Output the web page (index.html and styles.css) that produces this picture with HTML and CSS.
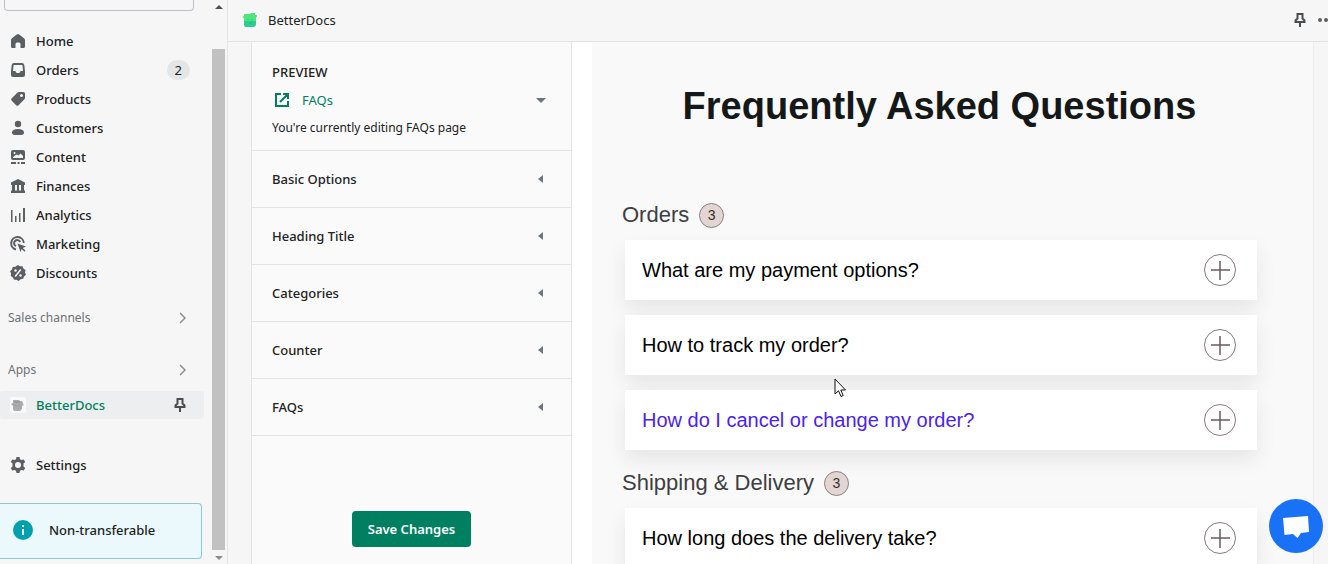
FILE: index.html
```html
<!DOCTYPE html>
<html lang="en">
<head>
  <meta charset="UTF-8">
  <title>BetterDocs</title>
  <link rel="stylesheet" href="styles.css">
</head>
<body>

  <div class="app">

    <aside class="sidebar">
      <div class="sidebar-content">
        <input class="search" type="text" aria-label="Search">

        <nav class="nav">
          <a href="#"><svg viewBox="0 0 16 16"><path d="M8 1Q8.600 1 9.200 1.500L14.300 5.500Q15 6 15 7V13.500Q15 15 13.500 15H10.500V11Q10.500 9.500 9 9.500H7Q5.500 9.500 5.500 11V15H2.500Q1 15 1 13.500V7Q1 6 1.700 5.500L6.800 1.500Q7.400 1 8 1Z"/></svg>Home</a>
          <a href="#"><svg viewBox="0 0 16 16"><path fill-rule="evenodd" d="M4 1H12Q14 1 14.300 3L15 9V13Q15 15 13 15H3Q1 15 1 13V9L1.700 3Q2 1 4 1ZM4 3Q3.600 3 3.500 3.500L3 9H5Q5.500 9 6 10Q6.300 11 7 11H9Q9.700 11 10 10Q10.500 9 11 9H13L12.500 3.500Q12.400 3 12 3Z"/></svg>Orders<span class="badge">2</span></a>
          <a href="#"><svg viewBox="0 0 16 16"><path fill-rule="evenodd" d="M9 1H13.500Q15 1 15 2.500V7Q15 7.700 14.400 8.300L8.300 14.400Q7.500 15.200 6.500 14.400L1.500 9.500Q.700 8.500 1.500 7.600L7.600 1.500Q8.200 1 9 1ZM11.500 3A1.500 1.500 0 1 0 11.500 6A1.500 1.500 0 1 0 11.500 3Z"/></svg>Products</a>
          <a href="#"><svg viewBox="0 0 16 16"><circle cx="8" cy="4" r="3.200"/><path d="M8 9C12 9 14 10.500 14 12.500C14 14 13 15 11.500 15H4.500C3 15 2 14 2 12.500C2 10.500 4 9 8 9Z"/></svg>Customers</a>
          <a href="#"><svg viewBox="0 0 16 16"><path fill-rule="evenodd" d="M3 1H13Q15 1 15 3V9Q15 11 13 11H3Q1 11 1 9V3Q1 1 3 1ZM3 9H13V7L10.500 4.500L8.500 6.500L6.500 5.500L3 8ZM4.500 3A1 1 0 1 0 4.500 5A1 1 0 1 0 4.500 3ZM1 13H6V15H1ZM7.500 13H9.500V15H7.500ZM11 13H15V15H11Z"/></svg>Content</a>
          <a href="#"><svg viewBox="0 0 16 16"><path fill-rule="evenodd" d="M8 1L15 4.500V7H14V12.500H15V15H1V12.500H2V7H1V4.500ZM5 7V12.500H7V7ZM9 7V12.500H11V7Z"/></svg>Finances</a>
          <a href="#"><svg viewBox="0 0 16 16"><path d="M1 3H2.500V15H1ZM5 9H6.500V15H5ZM9 6H10.500V15H9ZM13 1H15V15H13Z"/></svg>Analytics</a>
          <a href="#"><svg viewBox="0 0 16 16"><path class="line" d="M13.800 7A6.300 6.300 0 1 0 6 13.500M10.200 6A3.200 3.200 0 1 0 6 10.200"/><path d="M7.500 7.500L16 10.500L12.800 12L15.500 14.500L14.500 15.700L11.800 13L10.500 16Z"/></svg>Marketing</a>
          <a href="#"><svg viewBox="0 0 16 16"><path d="M8 0L10 1.300L12.500 1.200L13.400 3.500L15.500 5L15 7.500L16 9.800L14 11.500L13.200 13.800L10.700 14.200L8.700 16L6.500 14.800L4 14.800L2.900 12.500L.700 11L1.100 8.500L0 6.200L2 4.500L2.700 2.100L5.300 1.700Z"/><path class="cut" d="M10.800 4.500L5.200 11.500"/><circle class="dot" cx="5.500" cy="5.500" r="1.200"/><circle class="dot" cx="10.500" cy="10.500" r="1.200"/></svg>Discounts</a>
        </nav>

        <button class="section-title">Sales channels <svg viewBox="0 0 16 16"><path d="M6 3L11 8L6 13"/></svg></button>
        <button class="section-title apps">Apps <svg viewBox="0 0 16 16"><path d="M6 3L11 8L6 13"/></svg></button>

        <div class="nav app-nav">
          <a class="active" href="#">
            <svg class="docs-logo" viewBox="0 0 16 16"><rect class="logo-bg" width="16" height="16" rx="2"/><path d="M3 3H9L10 4H12L13 6V7L14 8L12 9V12L10 14H4L3 12V9L1 7L3 6Z"/><path class="face" d="M4 5H10M6 8V9M9 8V9"/></svg>
            BetterDocs
            <svg class="pin" viewBox="0 0 16 16"><path d="M4.500 2H11.500M5.500 2V6.500L3.500 8.500V10H12.500V8.500L10.500 6.500V2M8 10V15"/></svg>
          </a>
        </div>

        <nav class="nav settings">
          <a href="#"><svg viewBox="0 0 16 16"><path fill-rule="evenodd" d="M6.500 0H9.500L10 2.300L11.500 3.100L13.700 2.400L15.200 5L13.500 6.600V9.400L15.200 11L13.700 13.600L11.500 12.900L10 13.700L9.500 16H6.500L6 13.700L4.500 12.900L2.300 13.600L.800 11L2.500 9.400V6.600L.800 5L2.300 2.400L4.500 3.100L6 2.300ZM8 5A3 3 0 1 0 8 11A3 3 0 1 0 8 5Z"/></svg>Settings</a>
        </nav>

        <div class="notice">
          <svg viewBox="0 0 20 20"><circle cx="10" cy="10" r="10"/><path d="M9 5H11V7H9ZM9 9H11V15H9Z"/></svg>
          Non-transferable
        </div>
      </div>

      <div class="scrollbar">
        <span class="arrow-up"></span>
        <div class="thumb"></div>
        <span class="arrow-down"></span>
      </div>
    </aside>

    <main class="main">
      <header class="topbar">
        <svg class="docs-logo green" viewBox="0 0 16 16"><rect class="logo-bg" width="16" height="16" rx="2"/><path class="upper" d="M2 2H8L9 1H13V3H15V5H14V9H2V6L0 5L2 4Z"/><path class="lower" d="M2 9H14V13L12 15H3L2 13Z"/><path class="face" d="M6 7V8M10 7V8M7 11Q8 12 10 10"/></svg>
        <span>BetterDocs</span>
        <button class="icon-button pin-button" aria-label="Pin"><svg class="pin" viewBox="0 0 16 16"><path d="M4.500 2H11.500M5.500 2V6.500L3.500 8.500V10H12.500V8.500L10.500 6.500V2M8 10V15"/></svg></button>
        <button class="icon-button" aria-label="More"><svg class="more" viewBox="0 0 16 16"><circle cx="2" cy="8" r="2"/><circle cx="8" cy="8" r="2"/><circle cx="14" cy="8" r="2"/></svg></button>
      </header>

      <div class="workspace">
        <section class="panel">
          <div class="preview-select">
            <h2>PREVIEW</h2>
            <button class="page-picker">
              <svg viewBox="0 0 16 16"><path d="M7 2H2V14H14V9M9 2H14V7M13.500 2.500L6 10"/></svg>
              FAQs
              <span class="caret-down"></span>
            </button>
            <p>You're currently editing FAQs page</p>
          </div>
          <button class="option">Basic Options <span class="caret-left"></span></button>
          <button class="option">Heading Title <span class="caret-left"></span></button>
          <button class="option">Categories <span class="caret-left"></span></button>
          <button class="option">Counter <span class="caret-left"></span></button>
          <button class="option">FAQs <span class="caret-left"></span></button>
          <button class="save">Save Changes</button>
        </section>

        <section class="preview">
          <div class="faq-page">
            <h1>Frequently Asked Questions</h1>

            <h3>Orders <span class="count">3</span></h3>
            <div class="faq-list">
              <button class="faq">What are my payment options? <svg viewBox="0 0 32 32"><circle cx="16" cy="16" r="15.500"/><path d="M7 16H26M16 7V26"/></svg></button>
              <button class="faq">How to track my order? <svg viewBox="0 0 32 32"><circle cx="16" cy="16" r="15.500"/><path d="M7 16H26M16 7V26"/></svg></button>
              <button class="faq hovered">How do I cancel or change my order? <svg viewBox="0 0 32 32"><circle cx="16" cy="16" r="15.500"/><path d="M7 16H26M16 7V26"/></svg></button>
            </div>

            <h3>Shipping &amp; Delivery <span class="count">3</span></h3>
            <div class="faq-list">
              <button class="faq">How long does the delivery take? <svg viewBox="0 0 32 32"><circle cx="16" cy="16" r="15.500"/><path d="M7 16H26M16 7V26"/></svg></button>
            </div>
          </div>
        </section>
      </div>
    </main>

    <svg class="cursor" viewBox="0 0 12 20"><path d="M1 1V16L4.500 12.800L7 18.500L9.200 17.500L6.800 12H11.500Z"/></svg>
    <button class="chat" aria-label="Open chat"><svg viewBox="0 0 54 54"><path d="M14 19L39 17L40 33L32 34L28.500 39L24 35L15.500 36Z"/></svg></button>
  </div>

</body>
</html>
```

FILE: styles.css
```css
* {
  box-sizing: border-box;
}

body {
  margin: 0;
  background: #f6f6f7;
  color: #202223;
  font-family: "Noto Sans", "Open Sans", sans-serif;
  font-size: 13px;
  line-height: 20px;
}

button {
  font: inherit;
  color: inherit;
  background: none;
  border: none;
  padding: 0;
  text-align: left;
  cursor: pointer;
}

a {
  color: inherit;
  text-decoration: none;
}

svg {
  flex: none;
}

.app {
  display: flex;
  position: relative;
  height: 100vh;
  overflow: hidden;
}

/* sidebar */

.sidebar {
  display: flex;
  flex: none;
  width: 228px;
  border-right: 1px solid #e6e6e8;
}

.sidebar-content {
  display: flex;
  flex-direction: column;
  flex: 1;
}

.search {
  height: 11px;
  margin: 0 18px 15px 4px;
  border: 1px solid #babfc9;
  border-top: none;
  border-radius: 0 0 4px 4px;
  background: #f6f6f7;
}

.nav a {
  display: flex;
  align-items: center;
  gap: 10px;
  height: 29px;
  padding: 0 22px 0 10px;
  font-weight: 500;
}

.nav svg {
  width: 16px;
  height: 16px;
  fill: #5c5f62;
}

.nav .line {
  fill: none;
  stroke: #5c5f62;
  stroke-width: 2;
}

.nav .cut {
  stroke: #f6f6f7;
  stroke-width: 1.5;
}

.nav .dot {
  fill: #f6f6f7;
}

.badge {
  margin-left: auto;
  padding: 0 8px;
  border-radius: 10px;
  background: #e4e5e7;
  font-weight: 400;
}

.section-title {
  display: flex;
  align-items: center;
  justify-content: space-between;
  margin: 17px 22px 0 8px;
  height: 28px;
  color: #6d7175;
  font-size: 12px;
}

.section-title svg {
  width: 16px;
  height: 16px;
  fill: none;
  stroke: #8c9196;
  stroke-width: 1.5;
}

.section-title.apps {
  margin-top: 24px;
}

.app-nav {
  margin: 7px 8px 0 0;
}

.nav .active {
  height: 28px;
  padding: 0 16px 0 10px;
  border-radius: 3px;
  background: #edeeef;
  color: #008060;
}

.docs-logo {
  width: 16px;
  height: 16px;
}

.docs-logo path {
  fill: #a9acac;
}

.docs-logo .logo-bg {
  fill: #fafafa;
}

.docs-logo .face {
  fill: none;
  stroke: #8f9292;
}

.nav .pin,
.pin {
  width: 16px;
  height: 16px;
  margin-left: auto;
  fill: none;
  stroke: #4a4d50;
  stroke-width: 2;
}

.settings {
  margin-top: 31px;
}

.notice {
  display: flex;
  align-items: center;
  gap: 16px;
  height: 56px;
  margin: 24px 10px 0 0;
  padding: 0 0 2px 13px;
  border: 1px solid #8fc7cd;
  border-left: none;
  border-radius: 0 4px 4px 0;
  background: #ebf9fc;
  font-weight: 500;
}

.notice svg {
  width: 20px;
  height: 20px;
  fill: #00a0ac;
}

.notice path {
  fill: #fff;
}

.scrollbar {
  display: flex;
  flex-direction: column;
  align-items: center;
  width: 13px;
  margin-right: 2px;
}

.thumb {
  flex: 1;
  width: 13px;
  margin-top: 40px;
  background: #c1c1c1;
}

.arrow-up,
.arrow-down {
  border: 4px solid transparent;
}

.arrow-up {
  margin-top: 1px;
  border-bottom-color: #505050;
}

.arrow-down {
  margin: 6px 0 0;
  border-top-color: #8b8b8b;
}

/* main area */

.main {
  display: flex;
  flex-direction: column;
  flex: 1;
  min-width: 0;
}

.topbar {
  display: flex;
  align-items: center;
  gap: 10px;
  flex: none;
  height: 42px;
  padding: 0 0 2px 14px;
  border-bottom: 1px solid #e1e3e5;
  overflow: hidden;
}

.green .upper {
  fill: #4be77b;
}

.green .lower {
  fill: #27cf91;
}

.green .face {
  stroke: #1cb98a;
}

.icon-button {
  display: flex;
}

.pin-button {
  margin-left: auto;
}

.more {
  width: 16px;
  height: 16px;
  margin-right: -6px;
  fill: #5c5f62;
}

.workspace {
  display: flex;
  flex: 1;
  min-height: 0;
  padding: 0 14px 0 23px;
}

.panel {
  display: flex;
  flex-direction: column;
  flex: none;
  width: 321px;
  border: 1px solid #e1e3e5;
  border-width: 0 1px;
  background: #fafafa;
}

.preview-select {
  height: 109px;
  padding: 20px 20px 0;
  border-bottom: 1px solid #e1e3e5;
}

.preview-select h2 {
  margin: 0;
  font-size: 13px;
  font-weight: 500;
}

.preview-select p {
  margin: 0;
  font-size: 12px;
}

.page-picker {
  display: flex;
  align-items: center;
  gap: 12px;
  width: 100%;
  height: 36px;
  padding: 0 5px 0 2px;
  color: #008060;
}

.page-picker svg {
  width: 16px;
  height: 16px;
  fill: none;
  stroke: #008060;
  stroke-width: 2;
}

.caret-down {
  margin-left: auto;
  border: 5px solid transparent;
  border-top-color: #6d7580;
  border-bottom: none;
}

.caret-left {
  border: 4px solid transparent;
  border-right: 5px solid #6d7580;
  border-left: none;
}

.option {
  display: flex;
  align-items: center;
  justify-content: space-between;
  height: 57px;
  padding: 0 28px 0 20px;
  border-bottom: 1px solid #e1e3e5;
  font-weight: 500;
}

.save {
  align-self: center;
  height: 36px;
  margin: auto 0 17px;
  padding: 0 16px;
  border-radius: 4px;
  background: #008060;
  color: #fff;
  font-weight: 600;
}

.preview {
  flex: 1;
  min-width: 0;
  padding-left: 20px;
  border-right: 1px solid #ececed;
  background: #fff;
}

.faq-page {
  height: 100%;
  padding: 40px 56px 0 30px;
  background: #f9f9f9;
  font-family: "Liberation Sans", Arial, sans-serif;
  overflow: hidden;
}

.faq-page h1 {
  margin: 0 0 68px;
  color: #151818;
  font-size: 38px;
  line-height: 48px;
  text-align: center;
}

.faq-page h3 {
  display: flex;
  align-items: center;
  gap: 10px;
  margin: 0;
  height: 34px;
  color: #3d3f41;
  font-size: 22px;
  font-weight: 400;
}

.count {
  width: 25px;
  height: 25px;
  border: 1px solid #8b8082;
  border-radius: 50%;
  background: #e4d5d5;
  color: #303030;
  font-size: 14px;
  line-height: 23px;
  text-align: center;
}

.faq-list {
  display: flex;
  flex-direction: column;
  gap: 15px;
  margin: 8px 0 16px 3px;
}

.faq {
  display: flex;
  align-items: center;
  justify-content: space-between;
  height: 60px;
  padding: 0 21px 0 17px;
  background: #fff;
  box-shadow: 0 10px 20px rgba(40, 40, 60, 0.09);
  color: #000;
  font-size: 20px;
}

.faq svg {
  width: 32px;
  height: 32px;
  fill: none;
  stroke: #6e5a5f;
}

.faq circle {
  stroke: #857a7d;
}

.faq path {
  stroke-width: 1.5;
}

.faq.hovered {
  color: #4b22f0;
}

/* floating items */

.cursor {
  position: absolute;
  left: 834px;
  top: 378px;
  width: 12px;
  height: 20px;
  fill: #fff;
  stroke: #111;
}

.chat {
  position: absolute;
  right: 5px;
  bottom: 11px;
  width: 54px;
  height: 54px;
  border-radius: 50%;
  background: #1972f5;
}

.chat svg {
  display: block;
  fill: #fff;
}
```
